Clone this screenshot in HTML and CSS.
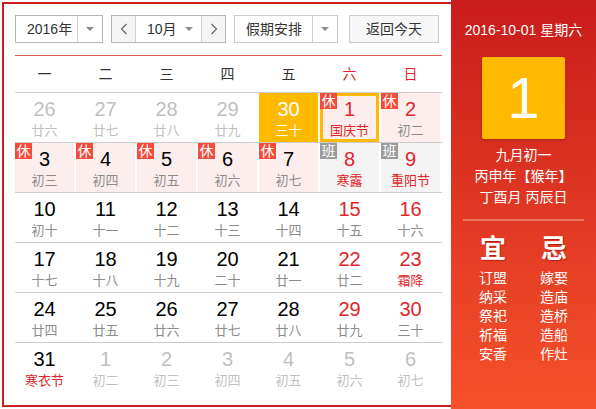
FILE: index.html
```html
<!DOCTYPE html>
<html lang="zh-CN">
<head>
<meta charset="utf-8">
<title>万年历</title>
<link rel="stylesheet" href="styles.css">
</head>
<body>
<div class="cal">
  <div class="main">
    <div class="toolbar">
      <div class="sel sel-year">
        <span class="sel-text">2016年</span>
        <span class="sel-arrow"><i class="tri"></i></span>
      </div>
      <div class="sel sel-month">
        <span class="nav-btn"><svg width="8" height="12" viewBox="0 0 8 12"><polyline points="6.5,1 1.5,6 6.5,11" fill="none" stroke="#666" stroke-width="1.2"/></svg></span>
        <span class="month-mid"><span class="sel-text">10月</span><i class="tri"></i></span>
        <span class="nav-btn"><svg width="8" height="12" viewBox="0 0 8 12"><polyline points="1.5,1 6.5,6 1.5,11" fill="none" stroke="#666" stroke-width="1.2"/></svg></span>
      </div>
      <div class="sel sel-holiday">
        <span class="sel-text">假期安排</span>
        <span class="sel-arrow"><i class="tri"></i></span>
      </div>
      <div class="btn-today">返回今天</div>
    </div>
    <div class="weekdays">
      <span>一</span><span>二</span><span>三</span><span>四</span><span>五</span><span class="wk-red">六</span><span class="wk-red">日</span>
    </div>
    <div class="grid">
      <div class="row">
        <div class="cell other"><div class="num">26</div><div class="lunar">廿六</div></div>
        <div class="cell other"><div class="num">27</div><div class="lunar">廿七</div></div>
        <div class="cell other"><div class="num">28</div><div class="lunar">廿八</div></div>
        <div class="cell other"><div class="num">29</div><div class="lunar">廿九</div></div>
        <div class="cell today"><div class="num">30</div><div class="lunar">三十</div></div>
        <div class="cell rest selected"><span class="badge">休</span><div class="num red">1</div><div class="lunar fest">国庆节</div></div>
        <div class="cell rest"><span class="badge">休</span><div class="num red">2</div><div class="lunar">初二</div></div>
      </div>
      <div class="row">
        <div class="cell rest"><span class="badge">休</span><div class="num">3</div><div class="lunar">初三</div></div>
        <div class="cell rest"><span class="badge">休</span><div class="num">4</div><div class="lunar">初四</div></div>
        <div class="cell rest"><span class="badge">休</span><div class="num">5</div><div class="lunar">初五</div></div>
        <div class="cell rest"><span class="badge">休</span><div class="num">6</div><div class="lunar">初六</div></div>
        <div class="cell rest"><span class="badge">休</span><div class="num">7</div><div class="lunar">初七</div></div>
        <div class="cell work"><span class="badge badge-work">班</span><div class="num red">8</div><div class="lunar fest">寒露</div></div>
        <div class="cell work"><span class="badge badge-work">班</span><div class="num red">9</div><div class="lunar fest">重阳节</div></div>
      </div>
      <div class="row">
        <div class="cell"><div class="num">10</div><div class="lunar">初十</div></div>
        <div class="cell"><div class="num">11</div><div class="lunar">十一</div></div>
        <div class="cell"><div class="num">12</div><div class="lunar">十二</div></div>
        <div class="cell"><div class="num">13</div><div class="lunar">十三</div></div>
        <div class="cell"><div class="num">14</div><div class="lunar">十四</div></div>
        <div class="cell"><div class="num red">15</div><div class="lunar">十五</div></div>
        <div class="cell"><div class="num red">16</div><div class="lunar">十六</div></div>
      </div>
      <div class="row">
        <div class="cell"><div class="num">17</div><div class="lunar">十七</div></div>
        <div class="cell"><div class="num">18</div><div class="lunar">十八</div></div>
        <div class="cell"><div class="num">19</div><div class="lunar">十九</div></div>
        <div class="cell"><div class="num">20</div><div class="lunar">二十</div></div>
        <div class="cell"><div class="num">21</div><div class="lunar">廿一</div></div>
        <div class="cell"><div class="num red">22</div><div class="lunar">廿二</div></div>
        <div class="cell"><div class="num red">23</div><div class="lunar fest">霜降</div></div>
      </div>
      <div class="row">
        <div class="cell"><div class="num">24</div><div class="lunar">廿四</div></div>
        <div class="cell"><div class="num">25</div><div class="lunar">廿五</div></div>
        <div class="cell"><div class="num">26</div><div class="lunar">廿六</div></div>
        <div class="cell"><div class="num">27</div><div class="lunar">廿七</div></div>
        <div class="cell"><div class="num">28</div><div class="lunar">廿八</div></div>
        <div class="cell"><div class="num red">29</div><div class="lunar">廿九</div></div>
        <div class="cell"><div class="num red">30</div><div class="lunar">三十</div></div>
      </div>
      <div class="row last">
        <div class="cell"><div class="num">31</div><div class="lunar fest">寒衣节</div></div>
        <div class="cell other"><div class="num">1</div><div class="lunar">初二</div></div>
        <div class="cell other"><div class="num">2</div><div class="lunar">初三</div></div>
        <div class="cell other"><div class="num">3</div><div class="lunar">初四</div></div>
        <div class="cell other"><div class="num">4</div><div class="lunar">初五</div></div>
        <div class="cell other"><div class="num">5</div><div class="lunar">初六</div></div>
        <div class="cell other"><div class="num">6</div><div class="lunar">初七</div></div>
      </div>
    </div>
  </div>
  <div class="panel">
    <div class="p-date">2016-10-01 星期六</div>
    <div class="p-day">1</div>
    <div class="p-lunar">
      <div>九月初一</div>
      <div>丙申年【猴年】</div>
      <div>丁酉月 丙辰日</div>
    </div>
    <div class="p-line"></div>
    <div class="p-yiji">
      <div class="p-col">
        <div class="p-head">宜</div>
        <div class="p-item">订盟</div>
        <div class="p-item">纳采</div>
        <div class="p-item">祭祀</div>
        <div class="p-item">祈福</div>
        <div class="p-item">安香</div>
      </div>
      <div class="p-col">
        <div class="p-head">忌</div>
        <div class="p-item">嫁娶</div>
        <div class="p-item">造庙</div>
        <div class="p-item">造桥</div>
        <div class="p-item">造船</div>
        <div class="p-item">作灶</div>
      </div>
    </div>
  </div>
</div>
</body>
</html>
```
FILE: styles.css
```css
* { box-sizing: border-box; }
html, body { margin: 0; padding: 0; background: #fff; }
body {
  font-family: "Liberation Sans", "Noto Sans CJK SC", sans-serif;
  color: #333;
}
.cal {
  display: flex;
  width: 596px;
  height: 409px;
}
.main {
  width: 449px;
  height: 405px;
  margin: 2px 0 2px 2px;
  border: 2px solid #c9201d;
  border-right: none;
  padding: 11px 9px 0 11px;
}
.toolbar {
  display: flex;
  height: 28px;
  margin-bottom: 12px;
}
.sel {
  display: flex;
  height: 28px;
  border: 1px solid #b4b4b4;
  font-size: 14px;
  line-height: 26px;
  color: #333;
  background: #fff;
}
.sel-text { padding-left: 11px; }
.sel-year { width: 88px; margin-right: 8px; }
.sel-year .sel-text { flex: 1; }
.sel-arrow {
  width: 25px;
  border-left: 1px solid #cfcfcf;
  display: flex;
  align-items: center;
  justify-content: center;
}
.tri {
  display: block;
  width: 0;
  height: 0;
  border-left: 4px solid transparent;
  border-right: 4px solid transparent;
  border-top: 4px solid #8a8a8a;
}
.sel-month { width: 115px; margin-right: 8px; }
.nav-btn {
  width: 24px;
  background: #f5f5f5;
  display: flex;
  align-items: center;
  justify-content: center;
}
.nav-btn:first-child { border-right: 1px solid #cfcfcf; }
.nav-btn:last-child { border-left: 1px solid #cfcfcf; }
.month-mid {
  flex: 1;
  display: flex;
  align-items: center;
  justify-content: space-between;
  padding-right: 8px;
}
.sel-holiday { width: 104px; border-color: #cccccc; }
.sel-holiday .sel-text { flex: 1; }
.btn-today {
  width: 90px;
  height: 28px;
  margin-left: 11px;
  border: 1px solid #cccccc;
  background: #f7f7f7;
  font-size: 14px;
  line-height: 26px;
  text-align: center;
  color: #333;
}
.weekdays {
  display: grid;
  grid-template-columns: repeat(7, 61px);
  height: 38px;
  border-top: 1px solid #df5a52;
  border-bottom: 1px solid #cccccc;
  font-size: 14px;
  line-height: 36px;
  color: #333;
}
.weekdays span { width: 59px; text-align: center; }
.weekdays .wk-red { color: #e0262b; }
.row {
  display: grid;
  grid-template-columns: repeat(7, 61px);
  height: 50px;
  border-bottom: 1px solid #cccccc;
}
.row.last { border-bottom: none; }
.cell {
  position: relative;
  width: 59px;
  height: 49px;
  padding-top: 4px;
  text-align: center;
}
.num {
  font-size: 20px;
  line-height: 24px;
  color: #000;
}
.lunar {
  margin-top: 2px;
  font-size: 13px;
  line-height: 16px;
  color: #8c8c8c;
}
.num.red { color: #e0262b; }
.lunar.fest { color: #e0262b; }
.cell.other .num { color: #bfbfbf; }
.cell.other .lunar { color: #bfbfbf; }
.cell.today { background: #ffba00; }
.cell.today .num, .cell.today .lunar { color: #fff; }
.cell.rest { background: #fdeeee; }
.cell.work { background: #f3f3f3; }
.cell.selected { box-shadow: inset 0 0 0 3px #ffba00; }
.badge {
  position: absolute;
  top: 0;
  left: 0;
  width: 17px;
  height: 16px;
  background: #f44b3a;
  color: #fff;
  font-size: 14px;
  line-height: 16px;
  text-align: center;
}
.badge-work { background: #9b9b9b; }
.panel {
  width: 145px;
  height: 409px;
  background: linear-gradient(to bottom, #c91c1c, #f5522a);
  color: #fff;
  display: flex;
  flex-direction: column;
  align-items: center;
  padding-top: 20px;
}
.p-date {
  font-size: 14px;
  line-height: 20px;
}
.p-day {
  width: 83px;
  height: 82px;
  margin-top: 17px;
  background: #ffba00;
  border-radius: 2px;
  box-shadow: 0 1px 3px rgba(120, 20, 0, 0.45);
  font-size: 58px;
  line-height: 82px;
  text-align: center;
  color: #fff;
}
.p-lunar {
  margin-top: 6px;
  font-size: 14px;
  line-height: 21px;
  text-align: center;
}
.p-line {
  width: 121px;
  height: 2px;
  margin-top: 11px;
  background: #ec7a62;
}
.p-yiji {
  display: flex;
  margin-top: 13px;
}
.p-col {
  width: 61px;
  display: flex;
  flex-direction: column;
  align-items: center;
}
.p-head {
  font-size: 26px;
  line-height: 30px;
  font-weight: bold;
  text-shadow: 1px 1px 1px rgba(120, 0, 0, 0.5);
  margin-bottom: 5px;
}
.p-item {
  font-size: 14px;
  line-height: 19px;
}
```
